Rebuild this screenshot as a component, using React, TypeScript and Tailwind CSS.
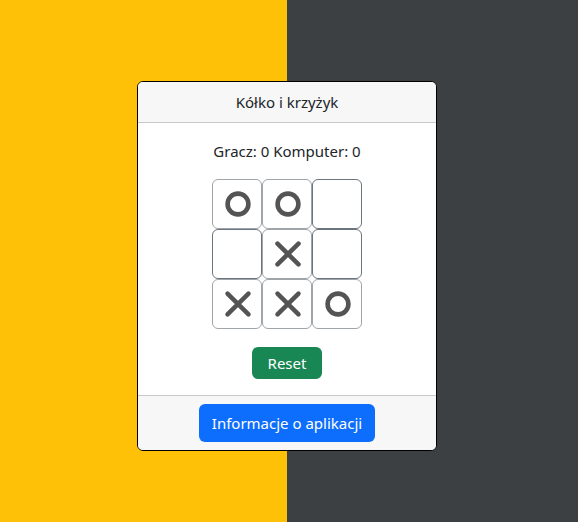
type Mark = "x" | "o" | null;

const board: Mark[] = ["o", "o", null, null, "x", null, "x", "x", "o"];

function Symbol({ mark }: { mark: Mark }) {
  if (!mark) return null;
  return (
    <svg viewBox="0 0 32 32" className="size-8" fill="none" stroke="#545454" aria-hidden="true">
      {mark === "o" ? (
        <circle cx="16" cy="16" r="10.4" strokeWidth="4.6" />
      ) : (
        <path d="M5.5 5.7 26.5 26.3M26.5 5.7 5.5 26.3" strokeWidth="4.5" strokeLinecap="round" />
      )}
    </svg>
  );
}

function Cell({ mark, index }: { mark: Mark; index: number }) {
  const border = mark ? "border-[#a0a5aa]" : "border-[#6c757d]";
  return (
    <button
      type="button"
      disabled={mark !== null}
      aria-label={`Pole ${index + 1}`}
      className={`flex size-[50px] items-center justify-center rounded-md border bg-white pl-0.5 ${border}`}
    >
      <Symbol mark={mark} />
    </button>
  );
}

export default function App() {
  return (
    <div className="min-h-screen bg-[#3c4042] pr-1 font-['Noto_Sans',sans-serif] text-[15px] leading-6 text-[#212529]">
      <main className="flex min-h-screen items-center justify-center bg-linear-to-r from-[#ffc107] from-50% to-[#3c4042] to-50% pt-[10px]">
        <section className="w-full max-w-[300px] overflow-hidden rounded-md border border-black bg-white text-center">
          <header className="border-b border-[#c9c9c9] bg-[#f7f7f7] py-2">
            <h1>Kółko i krzyżyk</h1>
          </header>
          <div className="flex flex-col items-center p-4">
            <p>Gracz: 0 Komputer: 0</p>
            <div className="mt-4 grid grid-cols-3">
              {board.map((mark, i) => (
                <Cell key={i} mark={mark} index={i} />
              ))}
            </div>
            <button type="button" className="mt-[18px] h-8 rounded-md bg-[#198754] px-4 text-white">
              Reset
            </button>
          </div>
          <footer className="flex justify-center border-t border-[#c9c9c9] bg-[#f7f7f7] py-2">
            <button type="button" className="h-[38px] rounded-md bg-[#0d6efd] px-[13px] text-white">
              Informacje o aplikacji
            </button>
          </footer>
        </section>
      </main>
    </div>
  );
}
